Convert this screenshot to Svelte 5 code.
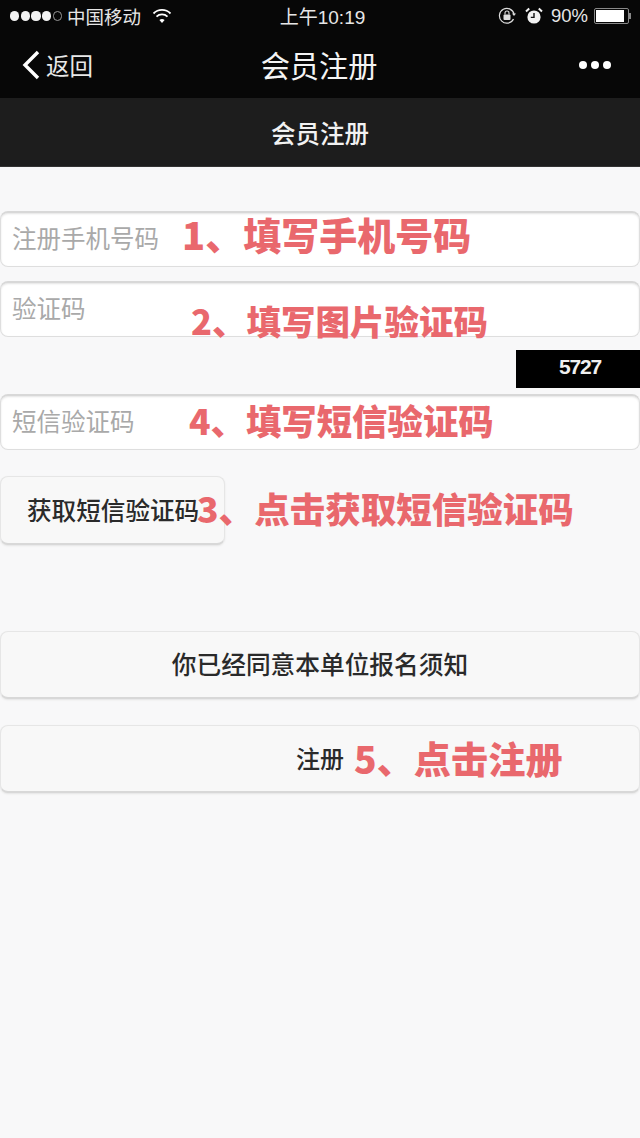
<script>
  const fields = [
    { placeholder: '注册手机号码', note: '1、填写手机号码', noteClass: 'note-one' },
    { placeholder: '验证码', note: '2、填写图片验证码', noteClass: 'note-two' },
  ];
</script>

<div class="page">
  <header class="topbar">
    <div class="status">
      <div class="status-left">
        <span class="dots">
          {#each [1, 2, 3, 4] as d (d)}<i class="dot"></i>{/each}<i class="dot empty"></i>
        </span>
        <span class="carrier">中国移动</span>
        <svg class="wifi" width="20" height="16" viewBox="0 0 20 16">
          <path d="M1.5 5.5a12 12 0 0 1 17 0" fill="none" stroke="#fff" stroke-width="1.8" />
          <path d="M4.5 8.6a8 8 0 0 1 11 0" fill="none" stroke="#fff" stroke-width="1.8" />
          <path d="M7.4 12a4 4 0 0 1 5.2 0L10 15z" fill="#fff" />
        </svg>
      </div>
      <span class="clock">上午10:19</span>
      <div class="status-right">
        <svg class="lock" width="20" height="20" viewBox="0 0 20 20">
          <path d="M16.5 13a7.4 7.4 0 1 1 .6-4.6" fill="none" stroke="#ddd" stroke-width="1.2" />
          <path d="M15 7.5h4l-2 2.6z" fill="#ddd" />
          <rect x="6.5" y="8.5" width="7" height="5.5" rx="1" fill="#ddd" />
          <path d="M8 8.5V7a2 2 0 0 1 4 0v1.5" fill="none" stroke="#ddd" stroke-width="1.1" />
        </svg>
        <svg class="alarm" width="18" height="18" viewBox="0 0 18 18">
          <circle cx="9" cy="10" r="6.6" fill="#f2f2f2" />
          <path d="M9 6v4.4H5.8" fill="none" stroke="#111" stroke-width="1.4" />
          <path d="M1 4.6 4.2 1.6M17 4.6l-3.2-3" stroke="#f2f2f2" stroke-width="2" />
        </svg>
        <span class="percent">90%</span>
        <span class="battery"><span class="level"></span></span><i class="nub"></i>
      </div>
    </div>
    <nav class="navbar">
      <div class="back">
        <svg width="20" height="32" viewBox="0 0 20 32">
          <path d="M17 3 4 16l13 13" fill="none" stroke="#fff" stroke-width="3.4" />
        </svg>
        <span>返回</span>
      </div>
      <span class="title">会员注册</span>
      <div class="more"><i></i><i></i><i></i></div>
    </nav>
  </header>

  <div class="subheader">会员注册</div>

  <main class="content">
    {#each fields as f (f.note)}
      <div class="field">
        <span class="placeholder">{f.placeholder}</span>
        <span class="note {f.noteClass}">{f.note}</span>
      </div>
    {/each}

    <div class="captcha-row"><div class="captcha">5727</div></div>

    <div class="field">
      <span class="placeholder">短信验证码</span>
      <span class="note note-four">4、填写短信验证码</span>
    </div>

    <div class="sms-row">
      <button class="btn sms">获取短信验证码</button>
      <span class="note note-three">3、 点击获取短信验证码</span>
    </div>

    <button class="btn wide agree">你已经同意本单位报名须知</button>
    <div class="register-wrap">
      <button class="btn wide register">注册</button>
      <span class="note note-five">5、点击注册</span>
    </div>
  </main>
</div>

<style>
  :global(body) {
    margin: 0;
    background: #f8f8f9;
  }

  .page {
    height: 1138px;
    overflow: hidden;
    background: #f8f8f9;
    font-family: "Noto Sans CJK SC", "Liberation Sans", sans-serif;
  }

  .topbar {
    height: 98px;
    background: #070707;
    color: #fff;
  }

  .status {
    height: 32px;
    padding: 0 9px 0 10px;
    display: flex;
    justify-content: space-between;
    align-items: center;
    position: relative;
    font-size: 18px;
    color: #e6e6e6;
  }

  .status-left,
  .status-right {
    display: flex;
    align-items: center;
  }

  .dots {
    display: flex;
    gap: 1.5px;
    margin-right: 5px;
  }

  .dot {
    width: 9.2px;
    height: 9.2px;
    border-radius: 50%;
    background: #f2f2f2;
  }

  .dot.empty {
    box-sizing: border-box;
    background: none;
    border: 1px solid #999;
  }

  .carrier {
    font-size: 18.5px;
    margin-right: 11px;
  }

  .clock {
    position: absolute;
    left: 0;
    right: 0;
    padding: 0 0 2px 5px;
    text-align: center;
    font-family: "Liberation Sans", "Noto Sans CJK SC", sans-serif;
    font-size: 19px;
    pointer-events: none;
  }

  .lock {
    margin-right: 8px;
  }

  .alarm {
    margin-right: 8px;
  }

  .percent {
    font-family: "Liberation Sans", sans-serif;
    font-size: 18.5px;
    margin-right: 6px;
  }

  .battery {
    box-sizing: border-box;
    width: 35px;
    height: 16px;
    padding: 1px;
    border: 1px solid #888;
    border-radius: 2px;
  }

  .level {
    display: block;
    width: 90%;
    height: 100%;
    background: #fff;
  }

  .nub {
    width: 2px;
    height: 6px;
    background: #888;
  }

  .navbar {
    height: 66px;
    padding: 0 29px 0 21px;
    display: flex;
    align-items: center;
    justify-content: space-between;
    position: relative;
  }

  .back {
    display: flex;
    align-items: center;
    gap: 5px;
    font-size: 23.5px;
    color: #e8e8e8;
  }

  .title {
    position: absolute;
    left: 0;
    right: 0;
    padding: 0 2px 3px 0;
    text-align: center;
    font-size: 29.2px;
    color: #f4f4f4;
    pointer-events: none;
  }

  .more {
    display: flex;
    gap: 4px;
  }

  .more i {
    width: 8px;
    height: 8px;
    border-radius: 50%;
    background: #fff;
  }

  .subheader {
    height: 69px;
    box-sizing: border-box;
    border-bottom: 1px solid #333;
    background: #1d1d1d;
    color: #f2f2f2;
    display: flex;
    align-items: center;
    justify-content: center;
    font-size: 24.5px;
    font-weight: 500;
  }

  .content {
    padding-top: 44px;
  }

  .field {
    box-sizing: border-box;
    position: relative;
    height: 56px;
    margin-bottom: 14px;
    padding: 0 11px 5px;
    display: flex;
    align-items: center;
    background: #fff;
    border: 1px solid #dedede;
    border-top: 2px solid #d8d8d8;
    border-radius: 8px;
    box-shadow: inset 0 1px 2px #e4e4e4;
  }

  .placeholder {
    font-size: 24.5px;
    color: #a9a9a9;
  }

  .note {
    position: absolute;
    z-index: 1;
    white-space: nowrap;
    font-size: 38px;
    line-height: 1;
    font-weight: 900;
    color: #e9686d;
  }

  .note-one { left: 181px; top: 2px; }
  .note-two { left: 190px; top: 20px; font-size: 34.5px; }
  .note-four { left: 188px; top: 6px; font-size: 35.4px; }
  .note-three { left: 197px; top: 14px; font-size: 35.5px; word-spacing: -8px; }
  .note-five { left: 354px; top: 15px; font-size: 37.2px; }

  .captcha-row {
    display: flex;
    justify-content: flex-end;
    height: 44px;
    margin-top: -1px;
  }

  .captcha {
    box-sizing: border-box;
    width: 124px;
    height: 38px;
    padding-right: 39px;
    padding-bottom: 5px;
    background: #000;
    color: #f0f0f0;
    display: flex;
    align-items: center;
    justify-content: flex-end;
    font-family: "Liberation Sans", sans-serif;
    font-size: 21px;
    font-weight: 700;
    letter-spacing: -1.2px;
  }

  .sms-row {
    position: relative;
    margin-top: 26px;
    height: 69px;
  }

  .btn {
    display: block;
    box-sizing: border-box;
    padding: 0;
    background: #f8f8f8;
    color: #2a2a2a;
    border: 1px solid #e6e6e6;
    border-bottom: 2px solid #d8d8d8;
    border-radius: 8px;
    box-shadow: 0 1px 2px #e4e4e4;
    font-family: inherit;
    font-weight: 500;
  }

  .sms {
    width: 225px;
    height: 69px;
    padding-left: 26px;
    padding-bottom: 2px;
    text-align: left;
    font-size: 24.6px;
    white-space: nowrap;
  }

  .wide {
    width: 100%;
    height: 68px;
    padding-bottom: 3px;
    text-align: center;
    font-size: 24.7px;
  }

  .agree {
    margin-top: 86px;
  }

  .register-wrap {
    position: relative;
    margin-top: 26px;
  }

  .register {
    font-size: 24px;
  }
</style>
